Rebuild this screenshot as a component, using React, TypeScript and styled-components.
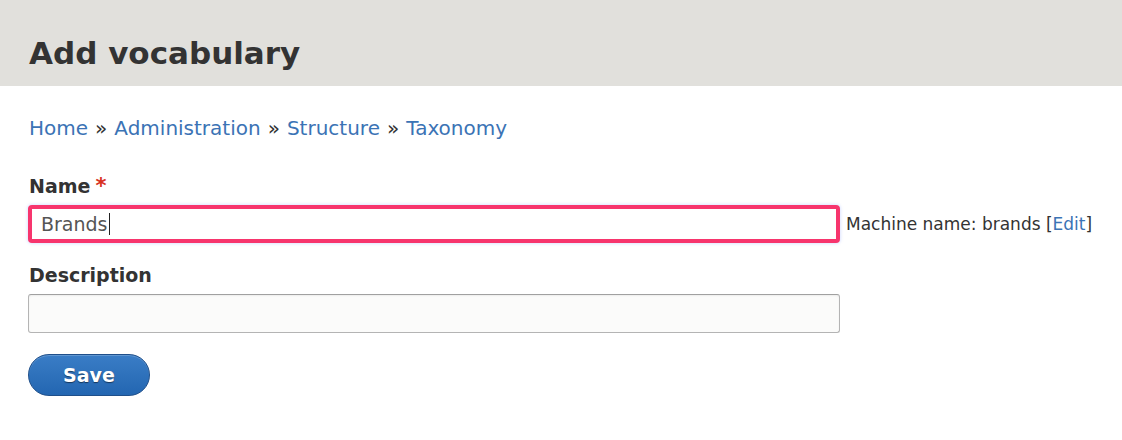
import React from "react";
import styled, { createGlobalStyle } from "styled-components";

const Global = createGlobalStyle`
  html, body { margin: 0; padding: 0; background: #ffffff; }
  body { font-family: "DejaVu Sans", "Liberation Sans", sans-serif; color: #333; }
`;

const Header = styled.header`
  background: #e1e0dc;
  height: 86px;
  padding: 20px 29px 0;
  display: flex;
  align-items: center;
  box-sizing: border-box;
`;

const Title = styled.h1`
  margin: 0;
  font-size: 31px;
  font-weight: bold;
  color: #333;
  letter-spacing: 0;
`;

const Main = styled.main`
  padding: 0 28px;
  display: flex;
  flex-direction: column;
`;

const Breadcrumb = styled.nav`
  margin-top: 29px;
  padding-left: 1px;
  font-size: 20px;
  line-height: 26px;
  color: #333;
`;

const Link = styled.a`
  color: #3b73b5;
  text-decoration: none;
`;

const Sep = styled.span`
  margin: 0 7px;
  color: #333;
`;

const Field = styled.div<{ $top: number }>`
  margin-top: ${(p) => p.$top}px;
  display: flex;
  flex-direction: column;
`;

const Label = styled.label`
  font-size: 19px;
  font-weight: bold;
  line-height: 22px;
  color: #333;
  padding-left: 1px;
  margin-bottom: 8px;
`;

const Req = styled.span`
  color: #d7321f;
  margin-left: 5px;
  font-size: 21px;
`;

const Row = styled.div`
  display: flex;
  align-items: center;
  gap: 6px;
`;

const TextBox = styled.div<{ $focused?: boolean }>`
  width: 812px;
  height: ${(p) => (p.$focused ? 38 : 39)}px;
  box-sizing: border-box;
  border-radius: ${(p) => (p.$focused ? 4 : 3)}px;
  border: ${(p) => (p.$focused ? "4px solid #f7356d" : "1px solid #b4b4b4")};
  border-top-color: ${(p) => (p.$focused ? "#f7356d" : "#a0a0a0")};
  background: ${(p) => (p.$focused ? "#ffffff" : "#fbfbfa")};
  box-shadow: ${(p) => (p.$focused ? "0 0 3px 1px rgba(160,180,255,0.35)" : "inset 0 1px 2px rgba(0,0,0,0.06)")};
  display: flex;
  align-items: center;
  padding-left: 9px;
  font-size: 19px;
  color: #555;
`;

const Caret = styled.span`
  display: inline-block;
  width: 1px;
  height: 22px;
  background: #222;
  margin-left: 1px;
`;

const Machine = styled.span`
  font-size: 17px;
  color: #333;
  white-space: nowrap;
`;

const SaveButton = styled.button`
  margin-top: 21px;
  width: 122px;
  height: 42px;
  border-radius: 21px;
  border: 1px solid #1f4f8a;
  background: linear-gradient(#3a7dc6, #2366b1);
  box-shadow: inset 0 1px 0 rgba(255, 255, 255, 0.2);
  color: #fff;
  font-family: "DejaVu Sans", "Liberation Sans", sans-serif;
  font-size: 19px;
  font-weight: bold;
  text-shadow: 0 1px 1px rgba(0, 0, 0, 0.5);
  cursor: pointer;
  padding: 0;
`;

export default function App() {
  return (
    <>
      <Global />
      <Header>
        <Title>Add vocabulary</Title>
      </Header>
      <Main>
        <Breadcrumb>
          <Link href="#">Home</Link>
          <Sep>»</Sep>
          <Link href="#">Administration</Link>
          <Sep>»</Sep>
          <Link href="#">Structure</Link>
          <Sep>»</Sep>
          <Link href="#">Taxonomy</Link>
        </Breadcrumb>
        <Field $top={34}>
          <Label>
            Name<Req>*</Req>
          </Label>
          <Row>
            <TextBox $focused>
              Brands
              <Caret />
            </TextBox>
            <Machine>
              Machine name: brands [<Link href="#">Edit</Link>]
            </Machine>
          </Row>
        </Field>
        <Field $top={21}>
          <Label>Description</Label>
          <TextBox />
        </Field>
        <div>
          <SaveButton>Save</SaveButton>
        </div>
      </Main>
    </>
  );
}
